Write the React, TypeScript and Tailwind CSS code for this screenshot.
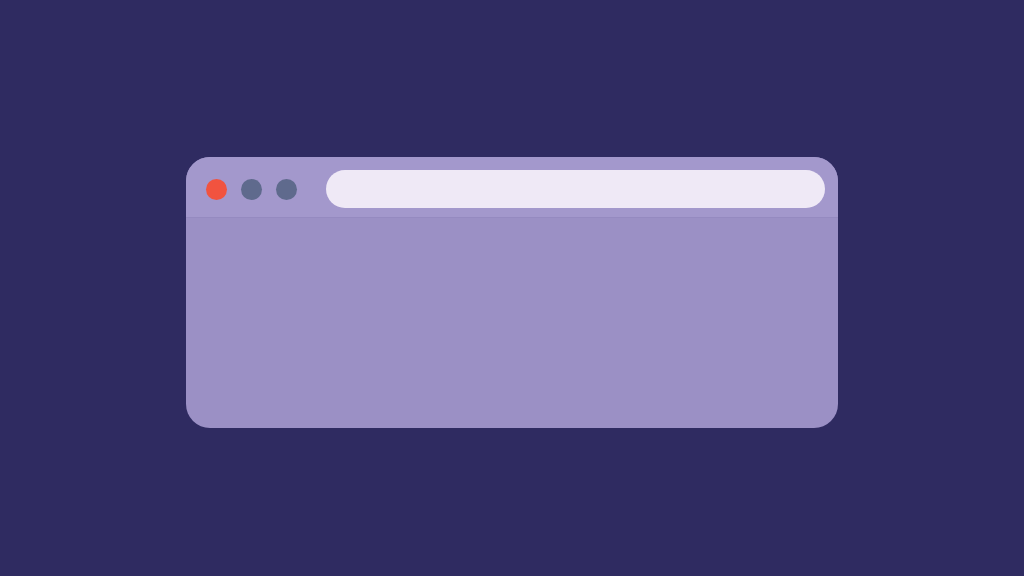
import React from 'react';

const Dot: React.FC<{ className: string }> = ({ className }) => (
  <div className={`w-[21px] h-[21px] rounded-full ${className}`} />
);

export default function App() {
  return (
    <div className="w-full h-screen bg-[#2f2b61] flex justify-center pt-[157px]">
      <div className="w-[652px] h-[271px] rounded-[24px] overflow-hidden bg-[#9b90c5] flex flex-col">
        <div className="h-[61px] bg-[#a398cc] flex items-center pl-5 pr-[13px] border-b border-[#958ac0]">
          <div className="flex items-center gap-[14px] mt-[4px]">
            <Dot className="bg-[#f1533f]" />
            <Dot className="bg-[#5f6a8d]" />
            <Dot className="bg-[#5f6a8d]" />
          </div>
          <div className="ml-[29px] flex-1 h-[38px] mt-[4px] rounded-full bg-[#efe9f6]" />
        </div>
        <div className="flex-1" />
      </div>
    </div>
  );
}
